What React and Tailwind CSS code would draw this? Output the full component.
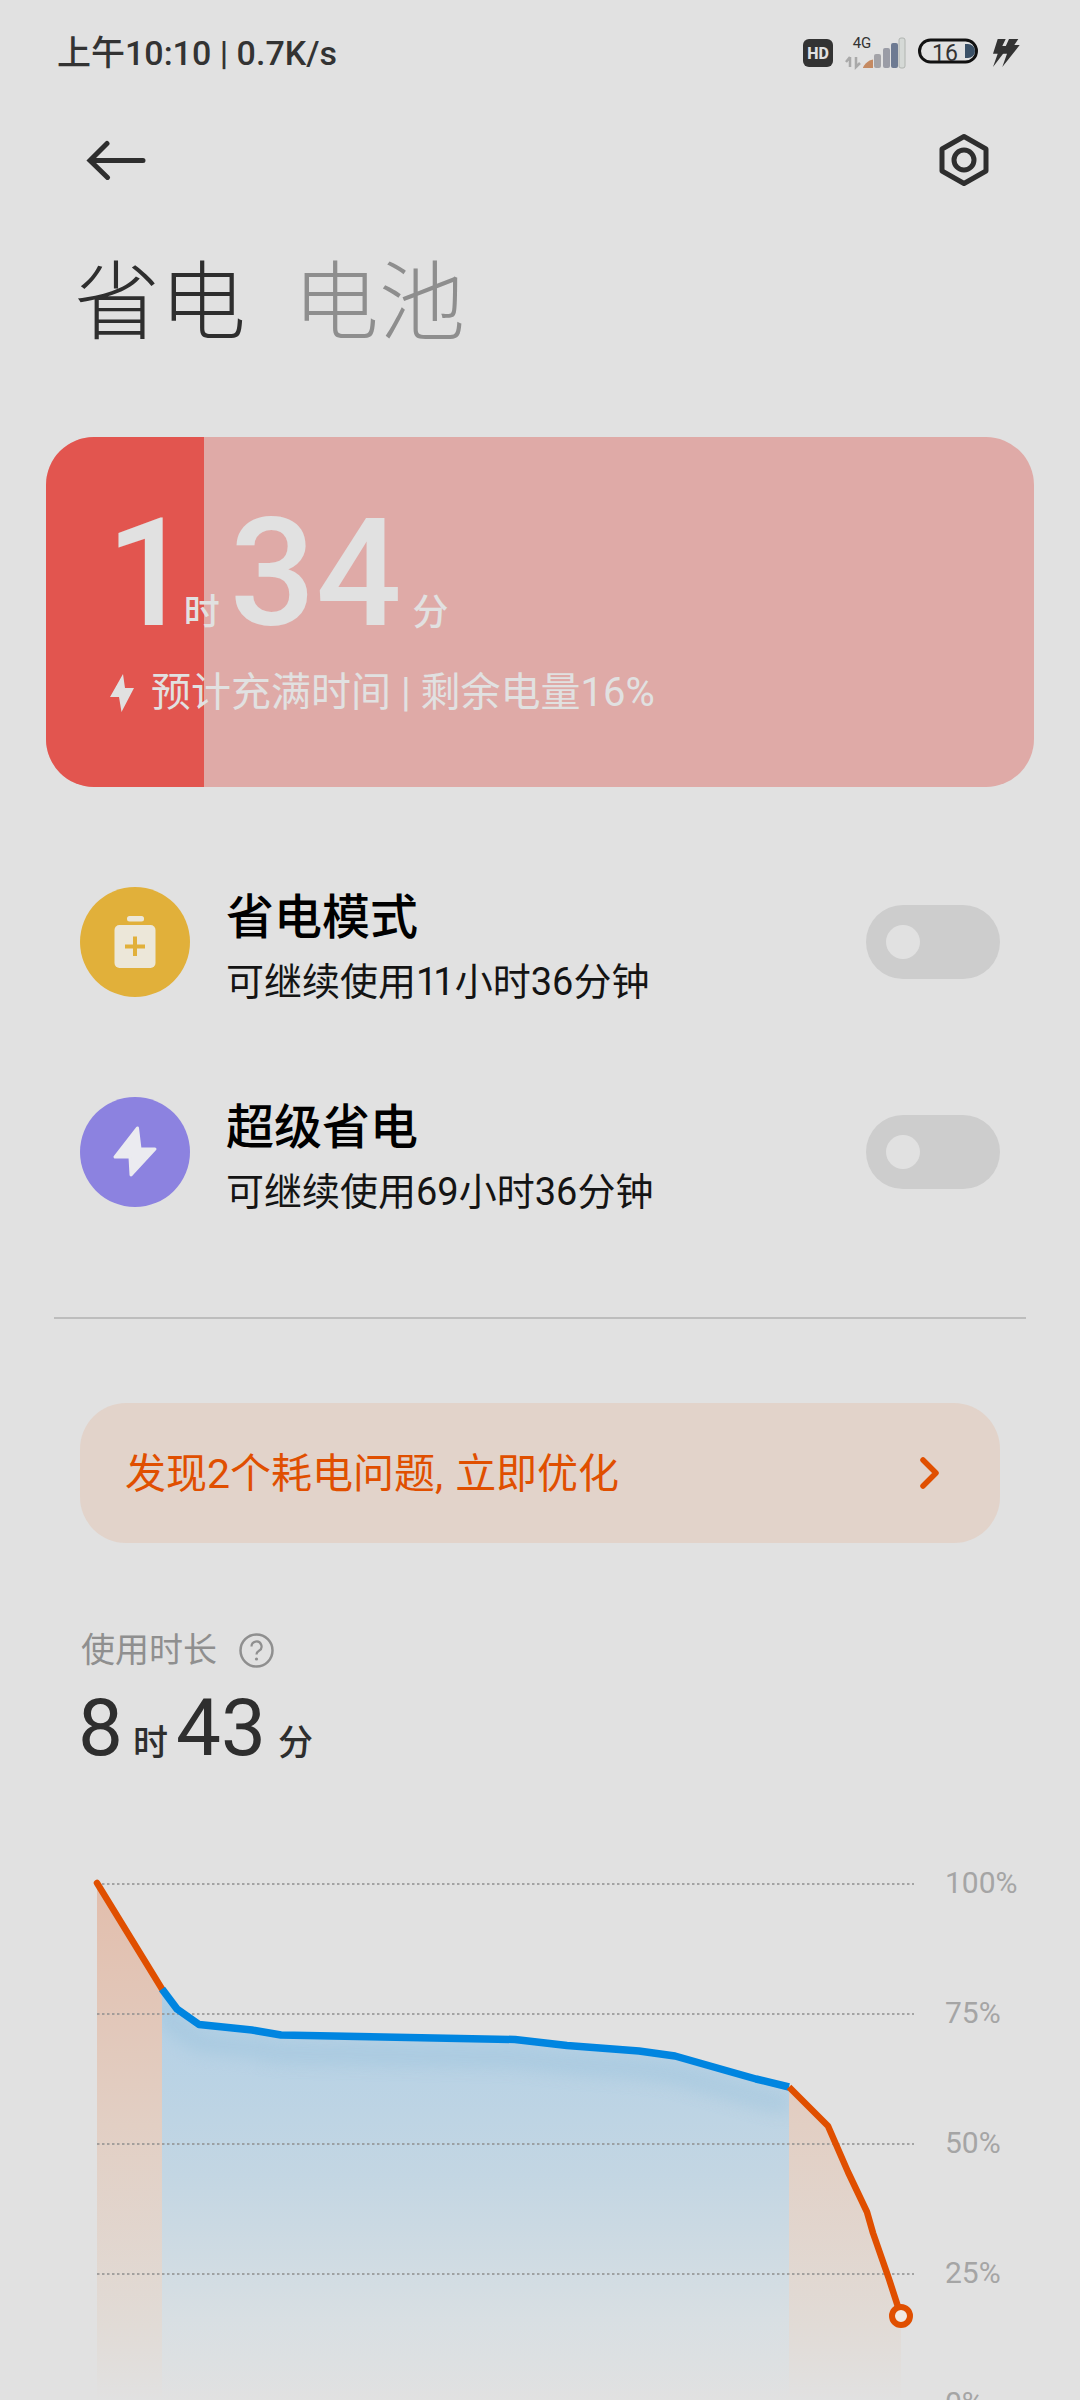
import React from "react";

const ORANGE = "#e04f00";
const BLUE = "#0085e0";

const leftOrange = "97,1882 162,1988";
const blueLine =
  "162,1988 177,2008 199,2023.5 252,2029 281,2034 515,2038.5 567,2044.5 639,2050 675,2055 733,2071.5 756,2078 789,2086";
const rightOrange = "789,2086 828,2125 848,2171 867,2211 873,2232 889,2278 901,2315";

function StatusIcons() {
  return (
    <svg width="222" height="44" viewBox="800 30 222 44">
      <rect x="803" y="38" width="30" height="28" rx="6" fill="#333" />
      <text x="818" y="57.5" textAnchor="middle" fontSize="16" fontWeight="800" fill="#e1e1e1" fontFamily="Roboto">HD</text>
      <text x="862" y="47" textAnchor="middle" fontSize="15" fill="#333" fontFamily="Roboto">4G</text>
      <path d="M850 56v10M846 61l4-5M856 56v10l4-4" stroke="#a9a9a9" strokeWidth="2.5" fill="none" />
      <path d="M863 66.500c2-4 5-7 10-8v8.500h-10z" fill="#c58a62" />
      <rect x="874" y="53" width="7" height="14" rx="2" fill="#a3a3a8" />
      <rect x="883" y="47" width="7" height="20" rx="2" fill="#9a9ca6" />
      <rect x="891" y="42" width="7" height="25" rx="2" fill="#6d7a92" />
      <rect x="899" y="37" width="6" height="30" rx="2" fill="#d5d9d6" stroke="#b0b4b0" />
      <rect x="919.500" y="39" width="57" height="22" rx="11" fill="none" stroke="#111" strokeWidth="3" />
      <text x="945" y="60" textAnchor="middle" fontSize="23" fill="#333" fontFamily="Roboto">16</text>
      <path d="M965 43h3a7 7 0 0 1 0 14h-3z" fill="#3a5066" />
      <path d="M997.700 38H1005.700L1002.300 45H1009L993 66L997.700 52.700H993Z" fill="#333" />
      <path d="M1009 38H1018.300L1014.300 44H1019.700L1002.300 66L1007 52.700H1002.300Z" fill="#333" />
    </svg>
  );
}

function ModeRow({ color, icon, title, sub }) {
  return (
    <div className="flex items-center h-[110px] pl-[80px] pr-[80px]">
      <div className={`w-[110px] h-[110px] rounded-full shrink-0 ${color}`}>{icon}</div>
      <div className="ml-[36px] mt-[10px] flex-1 flex flex-col">
        <div className="text-[48px] leading-[58px] font-medium text-black">{title}</div>
        <div className="text-[38px] leading-[46px] mt-[12px] text-[#141414]">{sub}</div>
      </div>
      <div className="w-[134px] h-[74px] rounded-full bg-[#cdcdcd] flex items-center pl-[20px]">
        <div className="w-[34px] h-[34px] rounded-full bg-[#e1e1e1]" />
      </div>
    </div>
  );
}

function UsageChart() {
  return (
    <svg width="830" height="540" viewBox="90 1860 830 540" className="shrink-0">
      <defs>
        <linearGradient id="blueFill" gradientUnits="userSpaceOnUse" x1="0" y1="1990" x2="0" y2="2400">
          <stop offset="0" stopColor="#b2d0e6" />
          <stop offset="0.45" stopColor="#c3d6e3" />
          <stop offset="0.8" stopColor="#d8dfe3" />
          <stop offset="1" stopColor="#e1e1e1" />
        </linearGradient>
        <linearGradient id="orangeFill" gradientUnits="userSpaceOnUse" x1="0" y1="1900" x2="0" y2="2400">
          <stop offset="0" stopColor="#e2bfae" />
          <stop offset="0.45" stopColor="#e2cfc4" />
          <stop offset="0.85" stopColor="#e1dbd6" />
          <stop offset="1" stopColor="#e1e1e1" />
        </linearGradient>
        <clipPath id="blueArea">
          <polygon points={`${blueLine} 789,2400 162,2400`} />
        </clipPath>
        <filter id="soft" x="-10%" y="-50%" width="120%" height="200%">
          <feGaussianBlur stdDeviation="9" />
        </filter>
      </defs>

      <polygon points={`${leftOrange} 162,2400 97,2400`} fill="url(#orangeFill)" />
      <polygon points={`${blueLine} 789,2400 162,2400`} fill="url(#blueFill)" />
      <polygon points={`${rightOrange} 901,2400 789,2400`} fill="url(#orangeFill)" />
      <g clipPath="url(#blueArea)">
        <polyline points={blueLine} transform="translate(0 18)" fill="none" stroke="#8fbcd8" strokeWidth="16" opacity="0.4" filter="url(#soft)" />
      </g>

      {[1883, 2013, 2143, 2273].map((y) => (
        <line key={y} x1="97" x2="914" y1={y} y2={y} stroke="#8f8f8f" strokeWidth="1.5" strokeDasharray="2.5 2.5" />
      ))}

      <polyline points={leftOrange} fill="none" stroke={ORANGE} strokeWidth="6.5" strokeLinecap="round" />
      <polyline points={blueLine} fill="none" stroke={BLUE} strokeWidth="7.5" strokeLinejoin="round" />
      <polyline points={rightOrange} fill="none" stroke={ORANGE} strokeWidth="6.5" strokeLinejoin="round" />
      <circle cx="901" cy="2315" r="9" fill="#f1e9e2" stroke={ORANGE} strokeWidth="6" />
    </svg>
  );
}

export default function App() {
  return (
    <div
      className="w-[1080px] h-[2400px] overflow-hidden bg-[#e1e1e1] text-[#2e2e2e]"
      style={{ fontFamily: 'Roboto, "Noto Sans CJK SC", sans-serif' }}
    >
      {/* status bar */}
      <div className="h-[106px] flex items-center justify-between pl-[57px] pr-[58px]">
        <div className="text-[34px] leading-none font-medium text-[#333]">上午10:10 | 0.7K/s</div>
        <StatusIcons />
      </div>

      {/* nav */}
      <div className="h-[108px] flex items-center justify-between pl-[86px] pr-[90px]">
        <svg width="60" height="40" viewBox="86 140 60 40">
          <path d="M143 160.5H91M107 143.5L90 160.5L107.5 177.5" fill="none" stroke="#2e2e2e" strokeWidth="5" strokeLinecap="round" />
        </svg>
        <svg width="52" height="56" viewBox="938 132 52 56">
          <path d="M964 136.5L986 149V171L964 183.5L942 171V149Z" fill="none" stroke="#2e2e2e" strokeWidth="5" strokeLinejoin="round" />
          <circle cx="964" cy="160" r="10" fill="none" stroke="#2e2e2e" strokeWidth="5" />
        </svg>
      </div>

      {/* tabs */}
      <div className="h-[174px] pt-[6px] flex items-center pl-[74px] gap-[47px] text-[86px] leading-none font-light">
        <span>省电</span>
        <span className="text-[#8e8e8e]">电池</span>
      </div>

      {/* charge card */}
      <div className="relative mt-[49px] mx-[46px] h-[350px] rounded-[48px] overflow-hidden bg-[#dfaaa7] text-[#e1e1e1]">
        <div className="absolute inset-y-0 left-0 w-[158px] bg-[#e2554f]" />
        <div className="relative pl-[60px] pt-[52px]">
          <div className="flex items-baseline h-[170px]">
            <span className="text-[151px] leading-[170px] font-medium">1</span>
            <span className="text-[36px] font-medium -ml-[8px]">时</span>
            <span className="text-[151px] leading-[170px] font-medium ml-[10px]">34</span>
            <span className="text-[36px] font-medium ml-[11px]">分</span>
          </div>
          <div className="flex items-center mt-[9px] ml-[4px]">
            <svg width="24" height="38" viewBox="0 0 24 38">
              <path d="M13 0L0 23H9L11.5 38L24 14H15Z" fill="#e1e1e1" />
            </svg>
            <span className="ml-[17px] text-[40px] leading-[50px]">预计充满时间 | 剩余电量16%</span>
          </div>
        </div>
      </div>

      <div className="mt-[100px]">
        <ModeRow
          color="bg-[#e1b03a]"
          title="省电模式"
          sub={<>可继续使用<span className="tracking-[-4px]">11</span><span className="ml-[4px]">小时36分钟</span></>}
          icon={
            <svg width="110" height="110" viewBox="0 0 110 110">
              <rect x="47" y="29" width="17" height="5.5" rx="2.5" fill="#ece7d9" />
              <rect x="34.500" y="38" width="41" height="43" rx="5" fill="#ece7d9" />
              <path d="M55 49.500V69M45 59.500H65" stroke="#e1b03a" strokeWidth="4" />
            </svg>
          }
        />
      </div>
      <div className="mt-[100px]">
        <ModeRow
          color="bg-[#8c82e0]"
          title="超级省电"
          sub="可继续使用69小时36分钟"
          icon={
            <svg width="110" height="110" viewBox="0 0 110 110">
              <path d="M57.500 31L35 60H50L51 78L75 52H60Z" fill="#ebebf0" stroke="#ebebf0" strokeWidth="3" strokeLinejoin="round" />
            </svg>
          }
        />
      </div>

      <div className="mt-[110px] mx-[54px] h-[1.5px] bg-[#bdbdbd]" />

      {/* optimize banner */}
      <div className="mt-[84px] mx-[80px] h-[140px] rounded-[46px] bg-[#e2d3ca] flex items-center justify-between pl-[45px] pr-[60px]">
        <span className="text-[41px] leading-none pt-[4px] text-[#e04f00]">
          发现2个耗电问题,<span className="ml-[12px]">立即优化</span>
        </span>
        <svg width="20" height="32" viewBox="0 0 20 32">
          <path d="M3 3L16 16L3 29" fill="none" stroke={ORANGE} strokeWidth="5.500" strokeLinecap="round" strokeLinejoin="round" />
        </svg>
      </div>

      {/* usage duration */}
      <div className="mt-[90px] pl-[81px] flex items-center h-[35px] text-[#8f8f8f]">
        <span className="text-[34px] leading-none">使用时长</span>
        <svg className="ml-[22px]" width="35" height="35" viewBox="0 0 35 35">
          <circle cx="17.500" cy="17.500" r="16" fill="none" stroke="#8f8f8f" strokeWidth="2.500" />
          <path d="M12.500 13.500a5 5 0 1 1 7.500 4.300c-1.600 1-2.500 1.700-2.500 3.700" fill="none" stroke="#8f8f8f" strokeWidth="2.200" />
          <circle cx="17.500" cy="26" r="1.600" fill="#8f8f8f" />
        </svg>
      </div>
      <div className="mt-[20px] pl-[78px] h-[80px] flex items-baseline text-[#2e2e2e]">
        <span className="text-[80px] leading-[80px]">8</span>
        <span className="text-[35px] font-medium ml-[10px]">时</span>
        <span className="text-[80px] leading-[80px] ml-[8px]">43</span>
        <span className="text-[35px] font-medium ml-[12px]">分</span>
      </div>

      {/* chart */}
      <div className="mt-[93px] pl-[90px] flex">
        <UsageChart />
        <div className="ml-[25px] flex flex-col gap-[86px] text-[30px] leading-[44px] text-[#a5a5a5]">
          <span>100%</span>
          <span>75%</span>
          <span>50%</span>
          <span>25%</span>
          <span>0%</span>
        </div>
      </div>
    </div>
  );
}
